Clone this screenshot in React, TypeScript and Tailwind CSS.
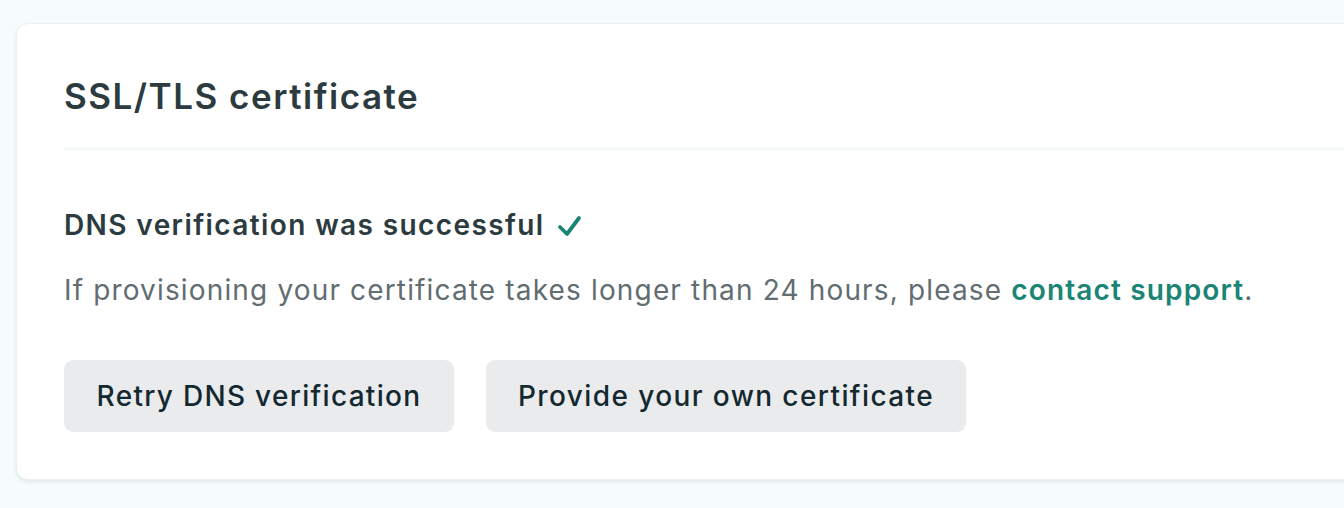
export default function App() {
  return (
    <div
      className="h-[508px] w-[1344px] overflow-hidden bg-[#f6fbfb] pt-[23px] pl-[16px]"
      style={{ fontFamily: 'Inter, "Noto Sans", sans-serif' }}
    >
      <div className="h-[457px] w-[1360px] rounded-l-[12px] border border-[#eceff0] bg-white shadow-[0_2px_4px_rgba(0,0,0,0.08)]">
        <div className="px-[47px] pt-[50px]">
          <h2 className="text-[35px] leading-[44px] font-semibold tracking-[1.5px] text-[#2c3b40]">
            SSL/TLS certificate
          </h2>
        </div>
        <div className="mt-[29px] ml-[47px] h-[4px] bg-[#f6f9f9]" />
        <div className="px-[47px] pt-[56px]">
          <p className="flex items-center gap-[12px] text-[28px] leading-[36px] font-semibold tracking-[1.4px] text-[#2c3b40]">
            DNS verification was successful
            <svg width="25" height="24" viewBox="0 0 25 24" fill="none" className="mt-[2px]">
              <path d="M3 13 L10 20 L22 4" stroke="#1a8574" strokeWidth="3.8" strokeLinecap="round" strokeLinejoin="round" />
            </svg>
          </p>
          <p className="mt-[29px] text-[28px] leading-[36px] tracking-[1.15px] text-[#616d71]">
            If provisioning your certificate takes longer than 24 hours, please{' '}
            <a href="#" className="font-semibold text-[#1a8574]">
              contact support
            </a>
            .
          </p>
          <div className="mt-[52px] flex gap-[32px]">
            <button className="h-[72px] w-[390px] rounded-[9px] bg-[#e9ebec] text-[28px] font-medium tracking-[1.3px] text-[#142830]">
              Retry DNS verification
            </button>
            <button className="h-[72px] w-[480px] rounded-[9px] bg-[#e9ebec] text-[28px] font-medium tracking-[1.4px] text-[#142830]">
              Provide your own certificate
            </button>
          </div>
        </div>
      </div>
    </div>
  );
}
